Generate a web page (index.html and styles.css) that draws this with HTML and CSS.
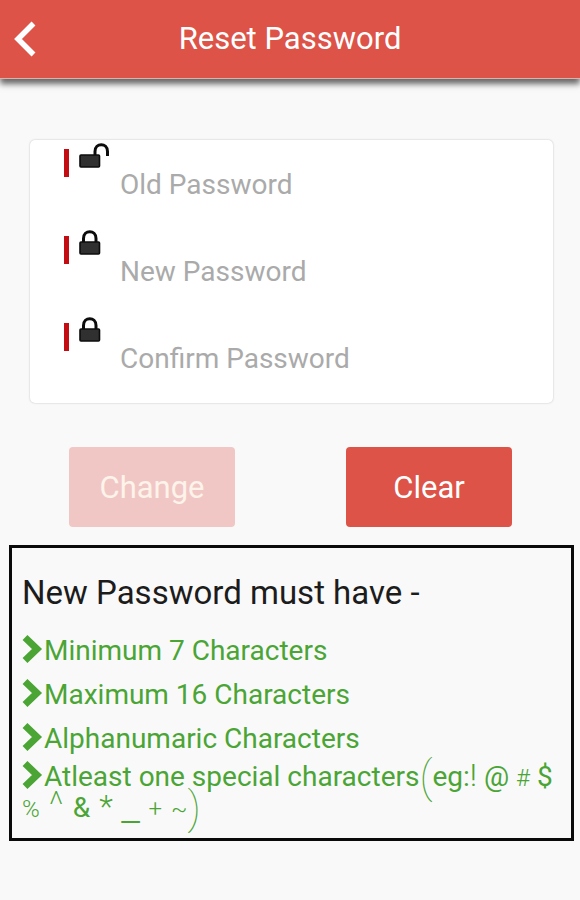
FILE: index.html
```html
<!DOCTYPE html>
<html lang="en">
<head>
<meta charset="utf-8">
<meta name="viewport" content="width=device-width, initial-scale=1">
<title>Reset Password</title>
<link rel="stylesheet" href="styles.css">
</head>
<body>
<svg class="sprite" aria-hidden="true">
  <symbol id="lock" viewBox="0 0 32 28">
    <path d="M4.500 14V9.500C4.500 0.500 17 0.500 17 9.500V14" fill="none" stroke="#0c0c0c" stroke-width="3"/>
    <rect x="1" y="13" width="19.500" height="12" rx="1" fill="#303030" stroke="#0c0c0c" stroke-width="1.600"/>
  </symbol>
  <symbol id="unlock" viewBox="0 0 32 28">
    <path d="M16 13V9.500C16 0.500 28.500 0.500 28.500 9.500V14" fill="none" stroke="#0c0c0c" stroke-width="3"/>
    <rect x="1" y="13" width="19.500" height="12" rx="1" fill="#303030" stroke="#0c0c0c" stroke-width="1.600"/>
  </symbol>
  <symbol id="chevron" viewBox="0 0 22 30">
    <path d="M3 3.500L15 15L3 26.500" fill="none" stroke="#4aa535" stroke-width="7"/>
  </symbol>
</svg>
<header class="bar">
  <button class="back" type="button" aria-label="Back">
    <svg viewBox="0 0 24 38"><path d="M20.500 3.500L5 19L20.500 34.500" fill="none" stroke="#fff" stroke-width="5.500"/></svg>
  </button>
  <h1 class="title">Reset Password</h1>
</header>
<main>
  <form class="form">
    <div class="card">
      <div class="field">
        <label class="mark" for="old" aria-label="Old Password"><svg class="lock"><use href="#unlock"/></svg></label>
        <input class="input" id="old" type="password" placeholder="Old Password">
      </div>
      <div class="field">
        <label class="mark" for="new" aria-label="New Password"><svg class="lock"><use href="#lock"/></svg></label>
        <input class="input" id="new" type="password" placeholder="New Password">
      </div>
      <div class="field">
        <label class="mark" for="confirm" aria-label="Confirm Password"><svg class="lock"><use href="#lock"/></svg></label>
        <input class="input" id="confirm" type="password" placeholder="Confirm Password">
      </div>
    </div>
    <div class="actions">
      <button class="action" type="submit" disabled>Change</button>
      <button class="action" type="reset">Clear</button>
    </div>
  </form>
  <section class="rules">
    <h2 class="heading">New Password must have -</h2>
    <ul class="list">
      <li class="rule"><svg class="chevron"><use href="#chevron"/></svg>Minimum 7 Characters</li>
      <li class="rule"><svg class="chevron"><use href="#chevron"/></svg>Maximum 16 Characters</li>
      <li class="rule"><svg class="chevron"><use href="#chevron"/></svg>Alphanumaric Characters</li>
      <li class="rule last"><svg class="chevron"><use href="#chevron"/></svg>Atleast one special characters<span class="paren">(</span>eg:<span class="tall">!</span> @ <span class="small">#</span> $ <span class="signs"><span class="small">%</span><span class="caret">^</span><span>&amp;</span><span class="tall">*</span><span class="under">_</span><span class="small">+</span><span class="small">~</span></span><span class="paren">)</span></li>
    </ul>
  </section>
</main>
</body>
</html>
```

FILE: styles.css
```css
* { box-sizing: border-box; }
body {
  margin: 0;
  min-height: 100vh;
  background: #f9f9f9;
  color: #1c1c1c;
  font-family: Roboto, "Liberation Sans", sans-serif;
}
button, input { font: inherit; }
.sprite { position: absolute; width: 0; height: 0; }

.bar {
  display: grid;
  grid-template-columns: 52px 1fr 52px;
  align-items: center;
  height: 79px;
  background: #dd5347;
  border-bottom: 1px solid #d8b3ae;
  box-shadow: 0 5px 6px #666;
}
.back {
  display: flex;
  padding: 0 0 0 13px;
  border: 0;
  background: none;
}
.back svg { width: 24px; height: 38px; }
.title {
  margin: 0;
  color: #fff;
  font-size: 31px;
  font-weight: 400;
  line-height: 42px;
  text-align: center;
}

.card {
  margin: 61px 27px 0 30px;
  padding-bottom: 2px;
  background: #fff;
  border-radius: 5px;
  box-shadow: 0 0 2px #bbb;
}
.field {
  display: grid;
  grid-template-columns: 90px 1fr;
  align-items: start;
  height: 87px;
}
.mark {
  display: flex;
  height: 28px;
  margin: 9px 0 0 34px;
  border-left: 5px solid #c40d12;
}
.lock {
  flex: none;
  width: 32px;
  height: 28px;
  margin: -7px 0 0 10px;
}
.input {
  width: 100%;
  height: 40px;
  margin-top: 24px;
  padding: 0;
  border: 0;
  outline: 0;
  background: none;
  font-size: 28px;
}
.input::placeholder { color: #aaa; opacity: 1; }

.actions {
  display: flex;
  justify-content: space-between;
  padding: 44px 68px 0 69px;
}
.action {
  width: 166px;
  height: 80px;
  padding: 0;
  border: 0;
  border-radius: 4px;
  background: #dd5347;
  color: #fff;
  font-size: 31px;
}
.action:disabled { background: #f1c7c5; color: #fcf3ea; }

.rules {
  margin: 18px 6px 0 9px;
  padding: 25px 10px 15px;
  border: 3px solid #0a0a0a;
}
.heading {
  margin: 0 0 16px;
  font-size: 33px;
  font-weight: 400;
  line-height: 40px;
}
.list {
  margin: 0;
  padding: 0;
  list-style: none;
  color: #4aa535;
}
.rule { font-size: 28px; line-height: 44px; }
.last { line-height: 31px; }
.chevron {
  width: 22px;
  height: 30px;
  margin: -4px 0;
  vertical-align: 0;
}
.last span { line-height: 0; }
.signs {
  display: inline-flex;
  align-items: baseline;
  gap: 9px;
}
.small { font-size: 24px; font-weight: 300; }
.tall { font-size: 32px; font-weight: 300; }
.caret {
  font-size: 36px;
  font-weight: 200;
}
.under {
  font-family: "Liberation Sans", sans-serif;
  font-size: 32px;
}
.paren {
  font-size: 44px;
  font-weight: 100;
  vertical-align: -6px;
}
```
